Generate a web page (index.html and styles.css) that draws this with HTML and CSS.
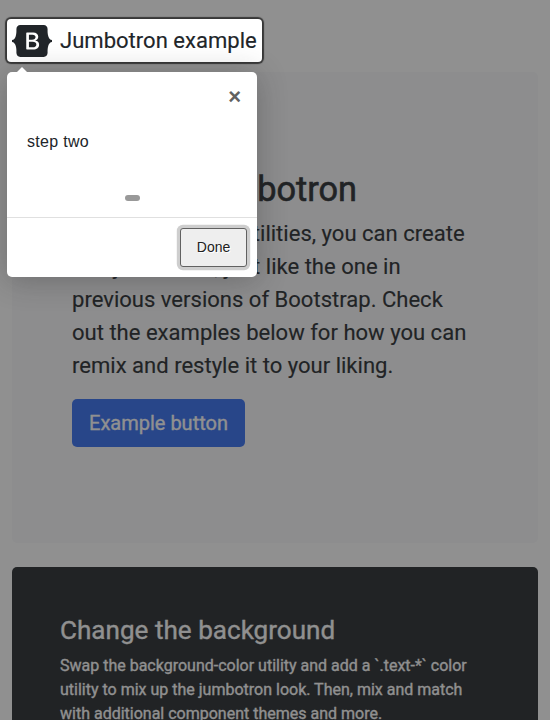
FILE: index.html
```html
<!DOCTYPE html>
<html lang="en">
<head>
<meta charset="utf-8">
<title>Jumbotron example</title>
<link rel="stylesheet" href="styles.css">
</head>
<body>
<header class="header">
  <a class="brand">
    <svg class="brand-logo" width="40" height="32" viewBox="0 0 118 94" fill="currentColor" aria-hidden="true"><path fill-rule="evenodd" clip-rule="evenodd" d="M24.509 0c-6.733 0-11.715 5.893-11.492 12.284.214 6.14-.064 14.092-2.066 20.577C8.943 39.365 5.547 43.485 0 44.014v5.972c5.547.529 8.943 4.649 10.951 11.153 2.002 6.485 2.28 14.437 2.066 20.577C12.794 88.106 17.776 94 24.51 94H93.5c6.733 0 11.714-5.893 11.491-12.284-.214-6.14.064-14.092 2.066-20.577 2.009-6.504 5.396-10.624 10.943-11.153v-5.972c-5.547-.529-8.934-4.649-10.943-11.153-2.002-6.484-2.28-14.437-2.066-20.577C105.214 5.894 100.233 0 93.5 0H24.508zM80 57.863C80 66.663 73.436 72 62.543 72H44a2 2 0 01-2-2V24a2 2 0 012-2h18.437c9.083 0 15.044 4.92 15.044 12.474 0 5.302-4.01 10.049-9.119 10.88v.277C75.317 46.394 80 51.21 80 57.863zM60.521 28.34H49.948v14.934h8.905c6.884 0 10.68-2.772 10.68-7.727 0-4.643-3.264-7.207-9.012-7.207zM49.948 49.2v16.458H60.91c7.167 0 10.964-2.876 10.964-8.281 0-5.406-3.903-8.178-11.425-8.178H49.948z"/></svg>
    <span class="brand-name">Jumbotron example</span>
  </a>
</header>
<main class="main">
  <section class="jumbotron">
    <h1 class="jumbotron-title">Custom jumbotron</h1>
    <p class="lead">Using a series of utilities, you can create<br>this jumbotron, just like the one in<br>previous versions of Bootstrap. Check<br>out the examples below for how you can<br>remix and restyle it to your liking.</p>
    <button class="btn-primary" type="button">Example button</button>
  </section>
  <section class="dark-card">
    <h2 class="dark-title">Change the background</h2>
    <p class="dark-text">Swap the background-color utility and add a `.text-*` color<br>utility to mix up the jumbotron look. Then, mix and match<br>with additional component themes and more.</p>
  </section>
</main>
<div class="tooltip" role="dialog">
  <div class="tooltip-arrow"></div>
  <div class="tooltip-header"><a class="tooltip-close">×</a></div>
  <div class="tooltip-text">step two</div>
  <div class="bullets"><span class="bullet"></span></div>
  <div class="tooltip-footer"><button class="tooltip-button" type="button">Done</button></div>
</div>
</body>
</html>
```
FILE: styles.css
```css
* { box-sizing: border-box; }
html { height: 100%; overflow: hidden; }
body {
  margin: 0;
  height: 100%;
  overflow: hidden;
  background: #fff;
  color: #212529;
  font-family: Roboto, "Liberation Sans", sans-serif;
}
h1, h2, p { margin: 0; }

.header { display: flex; height: 72px; padding: 19px 7px 0; }

/* Highlighted step: its outer shadow dims the rest of the page. */
.brand {
  position: relative;
  z-index: 10;
  display: flex;
  align-items: center;
  gap: 8px;
  width: 255px;
  height: 43px;
  padding-left: 5px;
  background: #fff;
  border-radius: 4px;
  box-shadow: 0 0 1px 2px rgba(33, 33, 33, .8), 0 0 0 5000px rgba(33, 33, 33, .5);
}
.brand-logo { flex: none; }
.brand-name { font-size: 22.05px; line-height: 30px; padding-top: 1px; white-space: nowrap; -webkit-text-stroke: .15px currentColor; }

.main { padding: 0 12px; }
.jumbotron {
  height: 471px;
  padding: 97px 60px 0;
  border-radius: 5px;
  background: #f8f9fa;
}
.jumbotron-title { font-size: 34.3px; font-weight: 400; line-height: 41px; margin-bottom: 7px; white-space: nowrap; -webkit-text-stroke: .6px currentColor; }
.lead { font-size: 22.05px; line-height: 33px; white-space: nowrap; -webkit-text-stroke: .15px currentColor; }
.btn-primary {
  display: block;
  width: 173px;
  height: 48px;
  margin-top: 17px;
  padding: 0;
  border: 0;
  border-radius: 5px;
  background: #2f6bf1;
  color: #fff;
  font: 400 20px/30px Roboto, sans-serif;
  -webkit-text-stroke: .3px currentColor;
}

.dark-card {
  height: 320px;
  margin-top: 24px;
  padding: 48px 48px 0;
  border-radius: 5px;
  background: #212529;
  color: #fff;
  -webkit-text-stroke: .3px currentColor;
}
.dark-title { font-size: 26.1px; font-weight: 400; line-height: 31px; margin-bottom: 8px; }
.dark-text { font-size: 16px; line-height: 24px; white-space: nowrap; }

.tooltip {
  position: absolute;
  z-index: 20;
  top: 72px;
  left: 7px;
  width: 250px;
  height: 205px;
  border-radius: 5px;
  background: #fff;
  box-shadow: 0 3px 30px rgba(33, 33, 33, .3);
  font-family: "Liberation Sans", sans-serif;
}
.tooltip-arrow {
  position: absolute;
  top: -5px;
  left: 10px;
  border: 5px solid transparent;
  border-top: 0;
  border-bottom-color: #fff;
}
.tooltip-header { display: flex; justify-content: flex-end; height: 50px; padding: 13px 16px 0; }
.tooltip-close { color: #616161; font-size: 22px; font-weight: 700; line-height: 24px; }
.tooltip-text { height: 73px; padding: 8px 20px 0; font-size: 16px; line-height: 24px; letter-spacing: .3px; }
.bullets { display: flex; justify-content: center; height: 22px; }
.bullet { width: 15px; height: 6px; border-radius: 10px; background: #999; }
.tooltip-footer { display: flex; justify-content: flex-end; padding: 10px; border-top: 1px solid #e0e0e0; }
.tooltip-button {
  width: 67px;
  height: 39px;
  padding: 0 0 2px;
  border: 1px solid #616161;
  border-radius: 3px;
  background: #eee;
  box-shadow: 0 0 0 3.2px rgba(158, 158, 158, .5);
  color: #212121;
  font: 14px/20px "Liberation Sans", sans-serif;
  text-shadow: 1px 1px 0 #fff;
}
```
